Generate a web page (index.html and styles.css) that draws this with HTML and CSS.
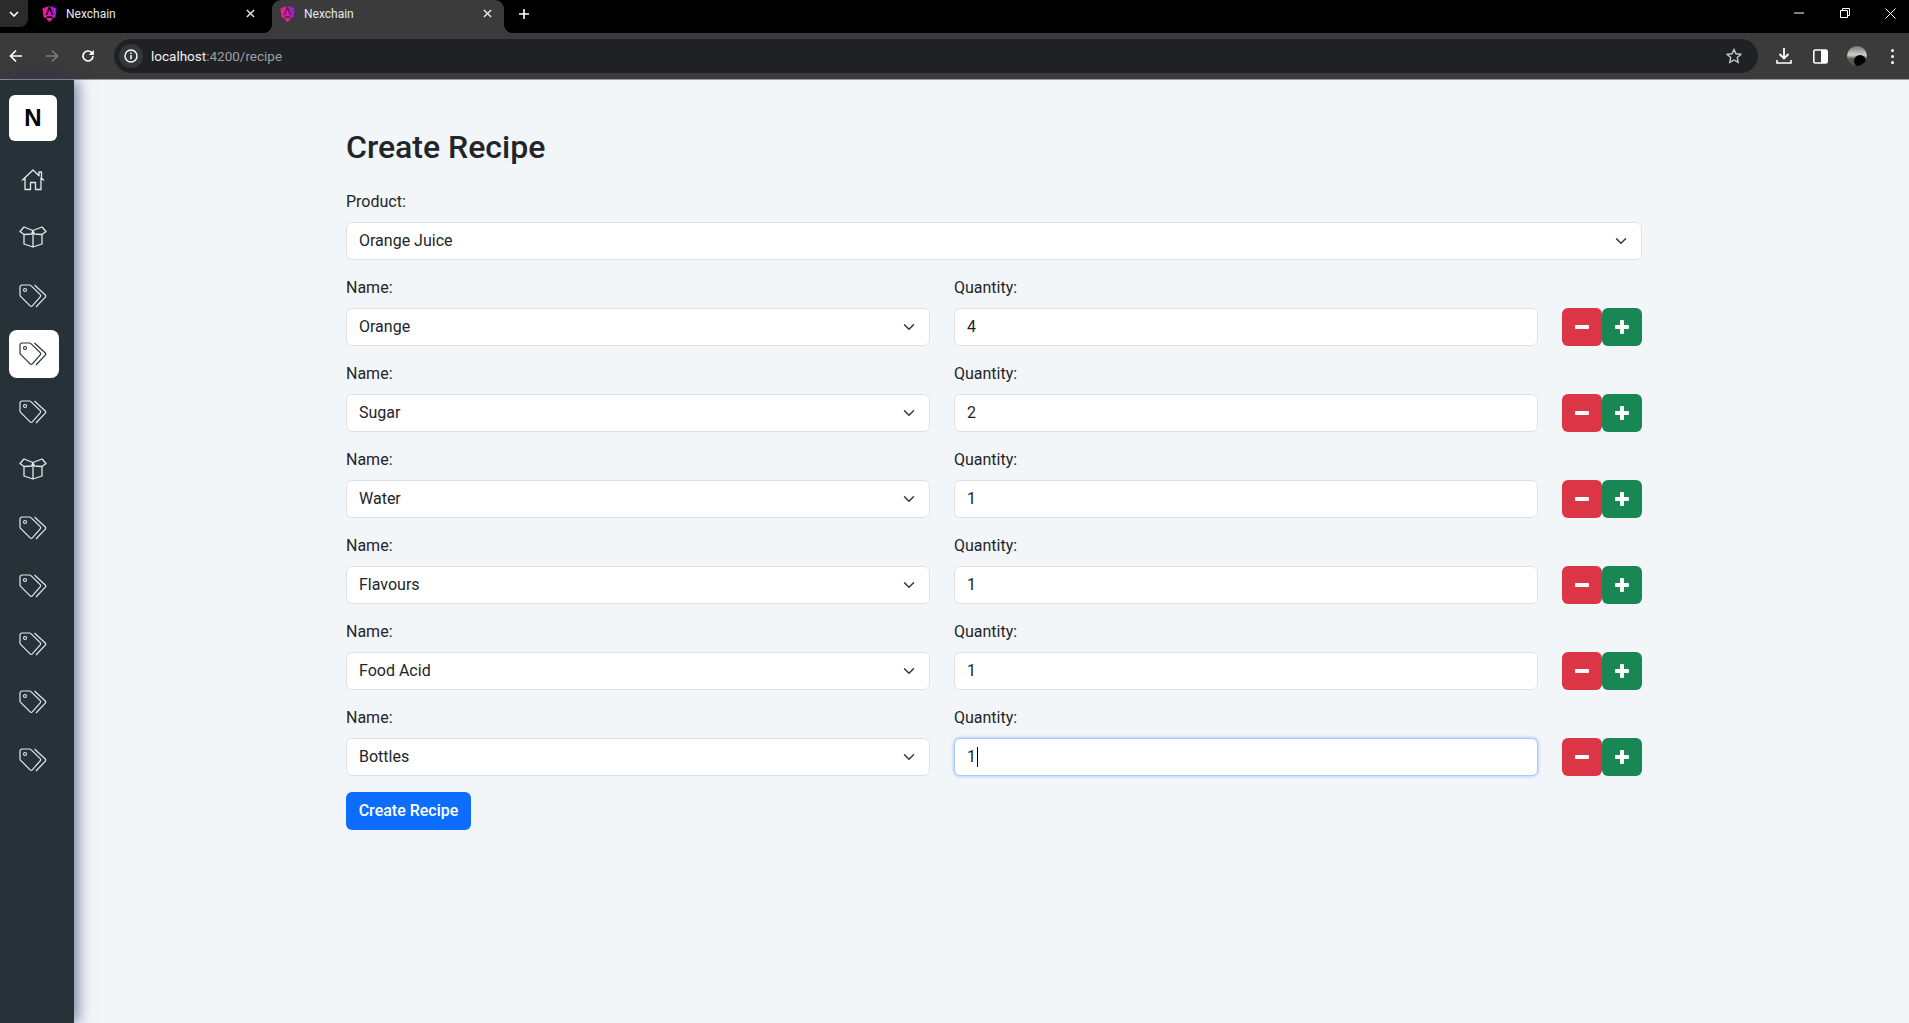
FILE: index.html
```html
<!DOCTYPE html>
<html>
<head>
<meta charset="utf-8">
<title>Nexchain</title>
<link rel="stylesheet" href="styles.css">
</head>
<body>
<svg class="defs" width="0" height="0">
	<defs>
		<linearGradient id="ngGrad" x1="0" y1="0" x2="1" y2="0">
			<stop offset="0" stop-color="#ff1493"/>
			<stop offset="0.55" stop-color="#e010c0"/>
			<stop offset="1" stop-color="#8a1cf0"/>
		</linearGradient>
		<symbol id="favicon" viewBox="0 0 14 16">
			<path fill="url(#ngGrad)" d="M6.600 0 0 2.300 1 11l2.600 1.500 1-2.300h4.800l1 2.300L13 11l1-8.700L7.400 0 11 9H9.200L7 3.500 4.800 9H3z"/>
			<path fill="#ff1a8c" d="M5.800 6.800h2.400L7 4.600zM3.900 13l3.100 3 3.100-3-1-1H4.900z"/>
		</symbol>
		<symbol id="close" viewBox="0 0 10 10">
			<path d="M1 1l8 8M9 1L1 9" fill="none" stroke="currentColor" stroke-width="1.600"/>
		</symbol>
		<symbol id="home" viewBox="0 0 24 22">
			<path d="M1 11.500 12 1l6 5.700V3h2.500v6.100L23 11.500M4 8.500V20.500h5.500v-7h5v7H20V8.500" fill="none" stroke="currentColor" stroke-width="1.300" stroke-linejoin="round"/>
		</symbol>
		<symbol id="box" viewBox="0 0 28 22">
			<path d="M5 8v10l9 3 9-3V8M14 21V4.500M14 4.500 5 1 1 5.500l4 3 7.500-.5zM14 4.500 23 1l4 4.500-4 3-7.500-.5z" fill="none" stroke="currentColor" stroke-width="1.300" stroke-linejoin="round"/>
		</symbol>
		<symbol id="tags" viewBox="0 0 28 24">
			<path d="M1 3a2 2 0 0 1 2-2h7.500a2 2 0 0 1 1.400.6l9.300 9a1.500 1.500 0 0 1 0 2.200l-7.900 9a1.500 1.500 0 0 1-2.200 0L1.600 12.300A2 2 0 0 1 1 10.900z" fill="none" stroke="currentColor" stroke-width="1.200"/>
			<circle cx="6" cy="6" r="1.500" fill="none" stroke="currentColor" stroke-width="1.100"/>
			<path d="M15.500 1 26.300 11a1.500 1.500 0 0 1 0 2.200L17 23" fill="none" stroke="currentColor" stroke-width="1.200"/>
		</symbol>
		<symbol id="chevron" viewBox="0 0 16 16">
			<path d="m2 5 6 6 6-6" fill="none" stroke="#343a40" stroke-width="2" stroke-linecap="round" stroke-linejoin="round"/>
		</symbol>
		<symbol id="minus" viewBox="0 0 14 14">
			<rect y="5" width="14" height="4" rx="1" fill="currentColor"/>
		</symbol>
		<symbol id="plus" viewBox="0 0 14 14">
			<path d="M5 1a1 1 0 0 1 1-1h2a1 1 0 0 1 1 1v4h4a1 1 0 0 1 1 1v2a1 1 0 0 1-1 1H9v4a1 1 0 0 1-1 1H6a1 1 0 0 1-1-1V9H1a1 1 0 0 1-1-1V6a1 1 0 0 1 1-1h4z" fill="currentColor"/>
		</symbol>
	</defs>
</svg>

<div class="tabbar">
	<div class="tab-menu"><svg width="10" height="6" viewBox="0 0 10 6"><path d="M1 1l4 4 4-4" fill="none" stroke="#fff" stroke-width="1.600"/></svg></div>
	<div class="tab">
		<svg class="favicon"><use href="#favicon"/></svg>
		<span class="tab-title">Nexchain</span>
		<svg class="tab-close"><use href="#close"/></svg>
	</div>
	<div class="tab tab-active">
		<svg class="favicon"><use href="#favicon"/></svg>
		<span class="tab-title">Nexchain</span>
		<svg class="tab-close"><use href="#close"/></svg>
	</div>
	<svg class="tab-new" width="12" height="12" viewBox="0 0 12 12"><path d="M6 1v10M1 6h10" stroke="#fff" stroke-width="1.600"/></svg>
	<div class="win-controls">
		<svg width="10" height="10" viewBox="0 0 10 10"><path d="M0 5h10" stroke="#fff"/></svg>
		<svg width="10" height="10" viewBox="0 0 10 10"><path d="M.5 2.500h7v7h-7zM2.500 2.500V.5h7v7h-2" fill="none" stroke="#fff"/></svg>
		<svg width="11" height="11" viewBox="0 0 11 11"><path d="M.5.5l10 10M10.500.5l-10 10" stroke="#fff"/></svg>
	</div>
</div>

<div class="toolbar">
	<svg class="tool-back" width="14" height="14" viewBox="0 0 14 14"><path d="M13 7H2M7 1.500 1.500 7 7 12.500" fill="none" stroke="#fff" stroke-width="1.700"/></svg>
	<svg class="tool-forward" width="14" height="14" viewBox="0 0 14 14"><path d="M1 7h11M7 1.500 12.500 7 7 12.500" fill="none" stroke="#7c7c7c" stroke-width="1.700"/></svg>
	<svg class="tool-reload" width="14" height="14" viewBox="0 0 14 14"><path d="M12 7a5 5 0 1 1-1.500-3.600L12 5" fill="none" stroke="#fff" stroke-width="1.600"/><path d="M12.800 1v5h-5z" fill="#fff"/></svg>
	<div class="omnibox">
		<div class="site-info"><svg width="14" height="14" viewBox="0 0 14 14"><circle cx="7" cy="7" r="6" fill="none" stroke="#fff" stroke-width="1.400"/><path d="M7 6v4.200M7 3.500v1.400" stroke="#fff" stroke-width="1.500"/></svg></div>
		<span class="url"><span class="url-host">localhost</span>:4200/recipe</span>
		<svg class="star" width="16" height="16" viewBox="0 0 16 16"><path d="M8 1.500l2 4.300 4.700.6-3.400 3.200.9 4.700L8 12l-4.200 2.300.9-4.700L1.300 6.400 6 5.800z" fill="none" stroke="#c8c8c8" stroke-width="1.400"/></svg>
	</div>
	<svg class="tool-download" width="16" height="16" viewBox="0 0 16 16"><path d="M8 0v10M3.500 6 8 10.500 12.500 6" fill="none" stroke="#fff" stroke-width="1.800"/><path d="M1 12v3h14v-3" fill="none" stroke="#fff" stroke-width="1.600"/></svg>
	<svg class="tool-panel" width="15" height="15" viewBox="0 0 15 15"><rect x=".8" y="1" width="13.400" height="13" rx="1.500" fill="none" stroke="#fff" stroke-width="1.600"/><rect x="8" y="1" width="6" height="13" fill="#fff"/></svg>
	<div class="avatar"><span class="avatar-dark"></span></div>
	<div class="dots"><i></i><i></i><i></i></div>
</div>

<div class="app">
	<nav class="sidebar">
		<div class="logo">N</div>
		<ul class="side-menu">
			<li class="side-item"><svg class="icon-home"><use href="#home"/></svg></li>
			<li class="side-item"><svg class="icon-box"><use href="#box"/></svg></li>
			<li class="side-item"><svg class="icon-tags"><use href="#tags"/></svg></li>
			<li class="side-item side-active"><svg class="icon-tags"><use href="#tags"/></svg></li>
			<li class="side-item"><svg class="icon-tags"><use href="#tags"/></svg></li>
			<li class="side-item"><svg class="icon-box"><use href="#box"/></svg></li>
			<li class="side-item"><svg class="icon-tags"><use href="#tags"/></svg></li>
			<li class="side-item"><svg class="icon-tags"><use href="#tags"/></svg></li>
			<li class="side-item"><svg class="icon-tags"><use href="#tags"/></svg></li>
			<li class="side-item"><svg class="icon-tags"><use href="#tags"/></svg></li>
			<li class="side-item"><svg class="icon-tags"><use href="#tags"/></svg></li>
		</ul>
	</nav>

	<main class="content">
		<h2 class="page-title">Create Recipe</h2>

		<div class="form-group">
			<div class="form-label">Product:</div>
			<div class="form-control form-select">Orange Juice<svg class="chevron"><use href="#chevron"/></svg></div>
		</div>

		<div class="recipe-row">
			<div><div class="form-label">Name:</div><div class="form-control form-select">Orange<svg class="chevron"><use href="#chevron"/></svg></div></div>
			<div><div class="form-label">Quantity:</div><div class="form-control">4</div></div>
			<div class="row-actions">
				<div class="btn-icon btn-red"><svg><use href="#minus"/></svg></div>
				<div class="btn-icon btn-green"><svg><use href="#plus"/></svg></div>
			</div>
		</div>
		<div class="recipe-row">
			<div><div class="form-label">Name:</div><div class="form-control form-select">Sugar<svg class="chevron"><use href="#chevron"/></svg></div></div>
			<div><div class="form-label">Quantity:</div><div class="form-control">2</div></div>
			<div class="row-actions">
				<div class="btn-icon btn-red"><svg><use href="#minus"/></svg></div>
				<div class="btn-icon btn-green"><svg><use href="#plus"/></svg></div>
			</div>
		</div>
		<div class="recipe-row">
			<div><div class="form-label">Name:</div><div class="form-control form-select">Water<svg class="chevron"><use href="#chevron"/></svg></div></div>
			<div><div class="form-label">Quantity:</div><div class="form-control">1</div></div>
			<div class="row-actions">
				<div class="btn-icon btn-red"><svg><use href="#minus"/></svg></div>
				<div class="btn-icon btn-green"><svg><use href="#plus"/></svg></div>
			</div>
		</div>
		<div class="recipe-row">
			<div><div class="form-label">Name:</div><div class="form-control form-select">Flavours<svg class="chevron"><use href="#chevron"/></svg></div></div>
			<div><div class="form-label">Quantity:</div><div class="form-control">1</div></div>
			<div class="row-actions">
				<div class="btn-icon btn-red"><svg><use href="#minus"/></svg></div>
				<div class="btn-icon btn-green"><svg><use href="#plus"/></svg></div>
			</div>
		</div>
		<div class="recipe-row">
			<div><div class="form-label">Name:</div><div class="form-control form-select">Food Acid<svg class="chevron"><use href="#chevron"/></svg></div></div>
			<div><div class="form-label">Quantity:</div><div class="form-control">1</div></div>
			<div class="row-actions">
				<div class="btn-icon btn-red"><svg><use href="#minus"/></svg></div>
				<div class="btn-icon btn-green"><svg><use href="#plus"/></svg></div>
			</div>
		</div>
		<div class="recipe-row">
			<div><div class="form-label">Name:</div><div class="form-control form-select">Bottles<svg class="chevron"><use href="#chevron"/></svg></div></div>
			<div><div class="form-label">Quantity:</div><div class="form-control form-focus">1<span class="caret"></span></div></div>
			<div class="row-actions">
				<div class="btn-icon btn-red"><svg><use href="#minus"/></svg></div>
				<div class="btn-icon btn-green"><svg><use href="#plus"/></svg></div>
			</div>
		</div>

		<button class="btn-submit">Create Recipe</button>
	</main>
</div>
</body>
</html>
```

FILE: styles.css
```css
html, body {
  margin: 0;
  padding: 0;
  height: 100%;
}

body {
  display: flex;
  flex-direction: column;
  overflow: hidden;
  font-family: Roboto, "Liberation Sans", sans-serif;
  font-size: 16px;
  line-height: 24px;
  color: #212529;
  background-color: #f3f6f9;
}

.defs {
  position: absolute;
}

/* || browser tabs */

.tabbar {
  height: 33px;
  flex: none;
  display: flex;
  background-color: #000;
  color: #fff;
  font-size: 12px;
}

.tab-menu {
  width: 28px;
  height: 27px;
  display: flex;
  align-items: center;
  justify-content: center;
  background-color: #2b2b2b;
  border-bottom-right-radius: 8px;
}

.tab {
  width: 230px;
  height: 33px;
  margin-left: 14px;
  display: flex;
  align-items: center;
  box-sizing: border-box;
  padding: 0 17px 6px 0;
  color: #e8e8e8;
}

.tab-active {
  position: relative;
  width: 232px;
  margin-left: 0;
  padding: 0 12px 6px 8px;
  background-color: #3b3b3b;
  border-radius: 9px 9px 0 0;
}

/* the curved feet of the open tab */
.tab-active::before, .tab-active::after {
  content: "";
  position: absolute;
  bottom: 0;
  width: 8px;
  height: 8px;
}

.tab-active::before {
  left: -8px;
  background: radial-gradient(circle at 0 0, transparent 7.5px, #3b3b3b 8px);
}

.tab-active::after {
  right: -8px;
  background: radial-gradient(circle at 100% 0, transparent 7.5px, #3b3b3b 8px);
}

.favicon {
  width: 15px;
  height: 16px;
  flex: none;
}

.tab-title {
  margin-left: 9px;
  flex: 1;
}

.tab-close {
  width: 9px;
  height: 9px;
  flex: none;
}

.tab-new {
  margin: 8px 0 0 14px;
}

.win-controls {
  margin-left: auto;
  width: 102px;
  padding: 8px 13px 0 0;
  display: flex;
  justify-content: space-between;
  align-items: flex-start;
}

/* || browser toolbar */

.toolbar {
  height: 46px;
  flex: none;
  display: flex;
  align-items: center;
  background-color: #3b3b3b;
  border-bottom: 1px solid #9a9a9a;
}

.tool-back {
  margin-left: 9px;
}

.tool-forward {
  margin-left: 22px;
}

.tool-reload {
  margin-left: 22px;
}

.omnibox {
  width: 1644px;
  height: 34px;
  margin-left: 19px;
  display: flex;
  align-items: center;
  background-color: #202124;
  border-radius: 17px;
  font-size: 13.500px;
  color: #9aa0a6;
}

.site-info {
  width: 24px;
  height: 24px;
  margin: 0 8px 0 5px;
  display: flex;
  align-items: center;
  justify-content: center;
  background-color: #35363a;
  border-radius: 50%;
}

.url-host {
  color: #f1f1f1;
}

.star {
  margin-left: auto;
  margin-right: 16px;
}

.tool-download {
  margin-left: 18px;
}

.tool-panel {
  margin-left: 21px;
}

.avatar {
  width: 20px;
  height: 20px;
  margin-left: 19px;
  border-radius: 50%;
  overflow: hidden;
  background: linear-gradient(#777, #d0d0c8 45%, #555 65%);
}

.avatar-dark {
  display: block;
  width: 12px;
  height: 12px;
  margin: 9px 0 0 7px;
  border-radius: 50%;
  background-color: #000;
}

.dots {
  margin-left: 24px;
  display: flex;
  flex-direction: column;
  gap: 3px;
}

.dots i {
  width: 3px;
  height: 3px;
  border-radius: 50%;
  background-color: #fff;
}

/* || layout */

.app {
  flex: 1;
  display: flex;
  min-height: 0;
}

.sidebar {
  width: 74px;
  flex: none;
  padding-top: 15px;
  box-sizing: border-box;
  background-color: #263238;
  box-shadow: 4px 0 14px rgba(40, 50, 100, 0.6);
}

.logo {
  width: 48px;
  height: 46px;
  margin: 0 0 15px 9px;
  display: flex;
  align-items: center;
  justify-content: center;
  background-color: #fff;
  border-radius: 6px;
  font-family: "Liberation Sans", Arial, sans-serif;
  font-size: 24px;
  font-weight: 700;
  color: #000;
}

.side-menu {
  list-style-type: none;
  margin: 0;
  padding: 0;
  display: flex;
  flex-direction: column;
  gap: 10px;
}

.side-item {
  width: 50px;
  height: 48px;
  margin-left: 9px;
  display: flex;
  align-items: center;
  justify-content: center;
  border-radius: 8px;
  color: #e4e8ea;
}

.side-active {
  background-color: #fff;
  color: #263238;
}

.icon-home {
  width: 24px;
  height: 22px;
  margin-left: -3px;
}

.icon-box {
  width: 28px;
  height: 22px;
  margin: -2px 0 0 -3px;
}

.icon-tags {
  width: 28px;
  height: 24px;
  margin-left: -3px;
}

/* || form */

.content {
  width: 1296px;
  margin-left: 272px;
  padding-top: 48px;
}

.page-title {
  margin: 0 0 24px;
  font-size: 32px;
  font-weight: 500;
  line-height: 38px;
}

.form-group, .recipe-row {
  margin-bottom: 16px;
}

.recipe-row {
  display: grid;
  grid-template-columns: 584px 584px 80px;
  column-gap: 24px;
}

.form-label {
  margin-bottom: 8px;
}

.form-control {
  height: 38px;
  box-sizing: border-box;
  padding: 6px 12px;
  display: flex;
  align-items: center;
  background-color: #fff;
  border: 1px solid #dee2e6;
  border-radius: 6px;
}

.form-select {
  justify-content: space-between;
}

.chevron {
  width: 16px;
  height: 12px;
}

.form-focus {
  border-color: #a8c8f8;
  box-shadow: 0 0 3px 1px rgba(13, 110, 253, 0.25);
}

.caret {
  width: 1px;
  height: 20px;
  margin-left: 1px;
  background-color: #000;
}

.row-actions {
  display: flex;
  align-self: end;
}

.btn-icon {
  width: 40px;
  height: 38px;
  display: flex;
  align-items: center;
  justify-content: center;
  border-radius: 6px;
  color: #fff;
}

.btn-icon svg {
  width: 14px;
  height: 14px;
  margin-bottom: 1px;
}

.btn-red {
  background-color: #dc3545;
}

.btn-green {
  background-color: #198754;
}

.btn-submit {
  display: block;
  width: 125px;
  height: 38px;
  padding: 0 0 2px;
  background-color: #0d6efd;
  border: 0;
  border-radius: 6px;
  font: 500 16px Roboto, sans-serif;
  color: #fff;
}
```
